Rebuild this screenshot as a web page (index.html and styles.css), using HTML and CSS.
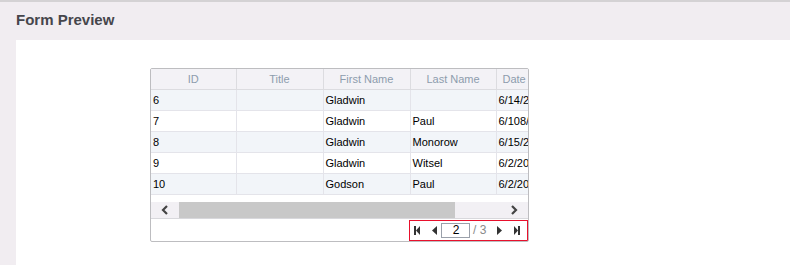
FILE: index.html
```html
<!DOCTYPE html>
<html>
<head>
<meta charset="utf-8">
<link rel="stylesheet" href="styles.css">
</head>
<body>
<div class="topline"></div>
<header class="title">Form Preview</header>
<main class="panel">
  <div class="grid">
    <div class="viewport">
      <table class="tbl">
        <colgroup><col class="c1"><col class="c2"><col class="c3"><col class="c4"><col class="c5"></colgroup>
        <thead>
          <tr><th>ID</th><th>Title</th><th>First Name</th><th>Last Name</th><th class="left">Date</th></tr>
        </thead>
        <tbody>
          <tr class="alt"><td>6</td><td></td><td>Gladwin</td><td></td><td>6/14/2017</td></tr>
          <tr><td>7</td><td></td><td>Gladwin</td><td>Paul</td><td>6/108/2017</td></tr>
          <tr class="alt"><td>8</td><td></td><td>Gladwin</td><td>Monorow</td><td>6/15/2017</td></tr>
          <tr><td>9</td><td></td><td>Gladwin</td><td>Witsel</td><td>6/2/2017</td></tr>
          <tr class="alt"><td>10</td><td></td><td>Godson</td><td>Paul</td><td>6/2/2017</td></tr>
        </tbody>
      </table>
    </div>
    <div class="hscroll">
      <span class="arrow">
        <svg width="10" height="10" viewBox="0 0 10 10"><path d="M7 1 L3 5 L7 9" fill="none" stroke="#444" stroke-width="2.2"/></svg>
      </span>
      <span class="thumb"></span>
      <span class="track"></span>
      <span class="arrow">
        <svg width="10" height="10" viewBox="0 0 10 10"><path d="M3 1 L7 5 L3 9" fill="none" stroke="#444" stroke-width="2.2"/></svg>
      </span>
    </div>
    <div class="pagerbar">
      <div class="pager">
        <svg class="pi first" width="6" height="9" viewBox="0 0 6 9"><rect x="0" y="0" width="2" height="9" fill="#333"/><path d="M6 0 L2 4.5 L6 9 Z" fill="#333"/></svg>
        <svg class="pi prev" width="5" height="9" viewBox="0 0 5 9"><path d="M5 0 L0 4.5 L5 9 Z" fill="#333"/></svg>
        <input class="page" type="text" value="2">
        <span class="total">/ 3</span>
        <svg class="pi next" width="5" height="9" viewBox="0 0 5 9"><path d="M0 0 L5 4.5 L0 9 Z" fill="#333"/></svg>
        <svg class="pi last" width="6" height="9" viewBox="0 0 6 9"><path d="M0 0 L4 4.5 L0 9 Z" fill="#333"/><rect x="4" y="0" width="2" height="9" fill="#333"/></svg>
      </div>
    </div>
  </div>
</main>
</body>
</html>
```
FILE: styles.css
```css
html, body {
  margin: 0;
  padding: 0;
  height: 100%;
}
body {
  background: #f1edf1;
  font-family: "Liberation Sans", Arial, sans-serif;
  display: flex;
  flex-direction: column;
  overflow: hidden;
}
.topline {
  height: 2px;
  background: #d4d2d4;
}
.title {
  height: 38px;
  box-sizing: border-box;
  padding: 9px 0 0 16px;
  font-size: 15px;
  font-weight: bold;
  color: #46464c;
}
.panel {
  flex: 1;
  margin-left: 16px;
  background: #fff;
  padding: 28px 0 0 134px;
}
.grid {
  width: 377px;
  height: 172px;
  border: 1px solid #bdbdc0;
  border-radius: 2px;
  display: flex;
  flex-direction: column;
  overflow: hidden;
}
.viewport {
  height: 133px;
  overflow: hidden;
}
.tbl {
  border-collapse: collapse;
  table-layout: fixed;
  width: 430px;
  font-size: 11px;
}
.c1 { width: 85px; }
.c2 { width: 87px; }
.c3 { width: 87px; }
.c4 { width: 86px; }
.c5 { width: 85px; }
.tbl th {
  height: 20px;
  padding: 0;
  font-weight: normal;
  color: #8d9cad;
  background: #f3f2f6;
  border-right: 1px solid #dcdce0;
  border-bottom: 1px solid #dcdce0;
  text-align: center;
}
.tbl th.left {
  text-align: left;
  padding-left: 6px;
}
.tbl td {
  height: 20px;
  padding: 0 0 0 2px;
  color: #000;
  border-right: 1px solid #e4e4ea;
  border-bottom: 1px solid #e4e4ea;
  white-space: nowrap;
  overflow: hidden;
}
.tbl tr.alt td {
  background: #f2f5f9;
}
.hscroll {
  height: 16px;
  display: flex;
  align-items: center;
  background: #f2f0f4;
  border-bottom: 1px solid #d8d8dc;
}
.arrow {
  width: 28px;
  display: flex;
  justify-content: center;
  align-items: center;
}
.thumb {
  width: 276px;
  height: 16px;
  background: #c8c8c8;
}
.track {
  flex: 1;
}
.pagerbar {
  flex: 1;
  display: flex;
  justify-content: flex-end;
  align-items: center;
}
.pager {
  box-sizing: border-box;
  width: 119px;
  height: 21px;
  border: 1px solid #e8102c;
  display: flex;
  align-items: center;
  padding-left: 4px;
  font-size: 12px;
  white-space: nowrap;
}
.pi { flex-shrink: 0; }
.first { margin-right: 12px; }
.prev { margin-right: 4px; }
.next { margin-right: 12px; }
.page {
  flex-shrink: 0;
  box-sizing: border-box;
  width: 29px;
  height: 15px;
  border: 1px solid #9aa0aa;
  padding: 0 0 0 1px;
  margin: 0;
  text-align: center;
  font: 12px "Liberation Sans", Arial, sans-serif;
  color: #000;
}
.total {
  flex-shrink: 0;
  width: 24px;
  color: #8a8a8a;
  margin-left: 3px;
}
```
